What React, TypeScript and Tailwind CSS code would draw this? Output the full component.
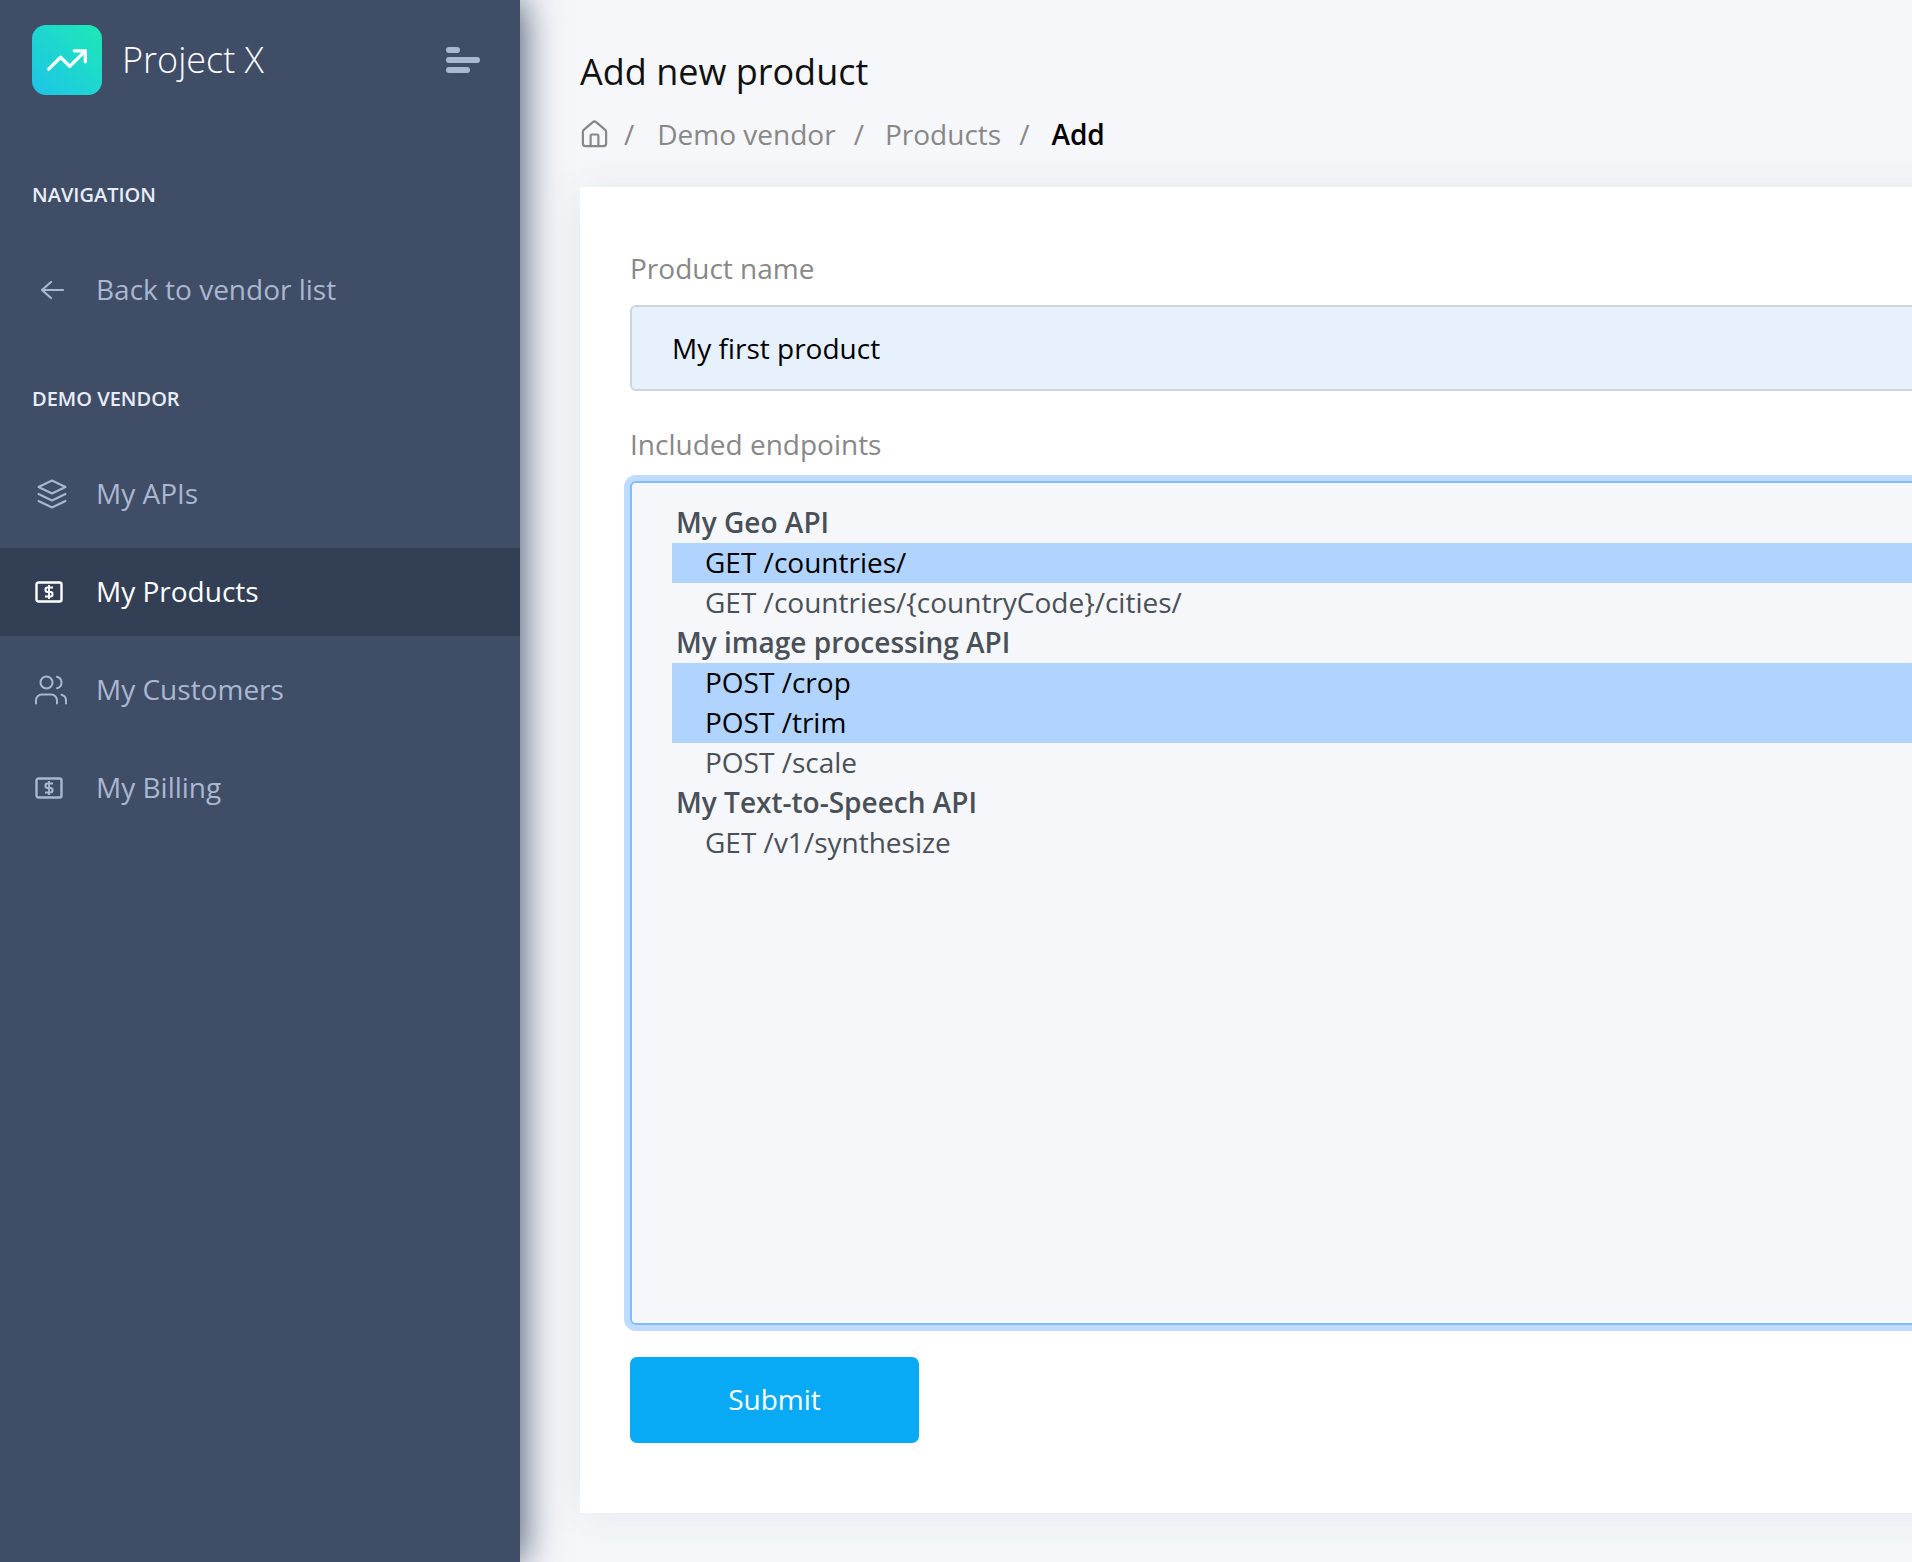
import { House, TrendingUp, Users } from "lucide-react";

function Bill({ className }: { className: string }) {
  return (
    <svg width="28" height="22" viewBox="0 0 28 22" fill="none" stroke="currentColor" strokeWidth="2.4" strokeLinejoin="round" className={className}>
      <rect x="1.5" y="1.5" width="25" height="19" rx="2" />
      <path d="M18 6.5H12.5Q10.5 6.5 10.5 8.75T12.5 11H15.5Q17.5 11 17.5 13.25T15.5 15.5H10" strokeWidth="2.1" />
      <path d="M14 4V18" strokeWidth="1.9" />
    </svg>
  );
}

function NavItem({ icon, label, active, cls }: { icon: React.ReactNode; label: string; active?: boolean; cls: string }) {
  return (
    <div className={`flex h-[88px] items-center ${cls} ${active ? "bg-[#333f54] text-white" : "text-[#a9b7d0]"}`}>
      {icon}
      <span className="-mt-0.5 text-[28px] leading-none">{label}</span>
    </div>
  );
}

const rows: { t: string; k: "g" | "o" | "s" }[] = [
  { t: "My Geo API", k: "g" },
  { t: "GET /countries/", k: "s" },
  { t: "GET /countries/{countryCode}/cities/", k: "o" },
  { t: "My image processing API", k: "g" },
  { t: "POST /crop", k: "s" },
  { t: "POST /trim", k: "s" },
  { t: "POST /scale", k: "o" },
  { t: "My Text-to-Speech API", k: "g" },
  { t: "GET /v1/synthesize", k: "o" },
];

export default function App() {
  return (
    <div className="flex h-[1562px] w-[1912px] overflow-hidden bg-[#f5f7fa] font-['Open_Sans',sans-serif]">
      <aside className="relative z-10 h-full w-[520px] shrink-0 bg-[#3f4d67] shadow-[2px_0_36px_0_#3f4d67]">
        <div className="flex h-[120px] items-center justify-between pl-8 pr-10">
          <div className="flex items-center">
            <div className="flex h-[70px] w-[70px] items-center justify-center rounded-[14px] bg-[linear-gradient(45deg,#1dc4e9,#1de9b6)] text-white">
              <TrendingUp size={44} strokeWidth={1.85} />
            </div>
            <span className="-mt-px ml-[20px] text-[36px] font-light leading-none text-white">Project X</span>
          </div>
          <div className="flex flex-col gap-1">
            <div className="h-1.5 w-3.5 rounded-full bg-[#a9b7d0]" />
            <div className="h-1.5 w-[34px] rounded-full bg-[#a9b7d0]" />
            <div className="h-1.5 w-6 rounded-full bg-[#a9b7d0]" />
          </div>
        </div>

        <div className="ml-8 mt-[62px] h-[26px] text-[20px] font-semibold leading-[26px] text-[#e8edf7]">NAVIGATION</div>
        <div className="mt-[38px]">
          <NavItem
            cls="pl-10"
            label="Back to vendor list"
            icon={
              <svg width="24" height="20" viewBox="0 0 24 20" fill="none" stroke="currentColor" strokeWidth="2.2" strokeLinecap="round" strokeLinejoin="round" className="mr-8 shrink-0">
                <path d="M23 10H2M11 2L2 10L11 18" />
              </svg>
            }
          />
        </div>
        <div className="ml-8 mt-[52px] h-[26px] text-[20px] font-semibold leading-[26px] text-[#e8edf7]">DEMO VENDOR</div>
        <div className="mt-[38px] flex flex-col gap-2.5">
          <NavItem
            cls="pl-[37px]"
            label="My APIs"
            icon={
              <svg width="30" height="30" viewBox="0 0 30 30" fill="none" stroke="currentColor" strokeWidth="2" strokeLinecap="round" strokeLinejoin="round" className="mr-[29px] shrink-0">
                <path d="M15 1.5L28.5 8L15 14.5L1.5 8Z" />
                <path d="M1.5 15L15 21.5L28.5 15" />
                <path d="M1.5 22L15 28.5L28.5 22" />
              </svg>
            }
          />
          <NavItem cls="pl-[35px]" active label="My Products" icon={<Bill className="mr-[33px] shrink-0" />} />
          <NavItem cls="pl-[33px]" label="My Customers" icon={<Users size={36} strokeWidth={1.35} className="mr-[27px] shrink-0" />} />
          <NavItem cls="pl-[35px]" label="My Billing" icon={<Bill className="mr-[33px] shrink-0" />} />
        </div>
      </aside>

      <main className="flex-1 overflow-hidden pl-[60px]">
        <h1 className="mt-[50px] h-[44px] text-[36px] font-normal leading-[44px] text-[#111]">Add new product</h1>
        <div className="mt-[20px] flex h-[40px] items-center text-[28px] leading-none text-[#888]">
          <House size={31} strokeWidth={1.7} className="-ml-px text-[#888]" />
          <span className="ml-[14px]">/</span>
          <span className="ml-[23px]">Demo vendor</span>
          <span className="ml-[18px]">/</span>
          <span className="ml-[21px]">Products</span>
          <span className="ml-[18px]">/</span>
          <span className="ml-[22px] font-semibold text-black">Add</span>
        </div>

        <section className="mt-[33px] h-[1326px] w-[1500px] bg-white pl-[50px] pt-[64px] shadow-[0_2px_40px_0_rgba(69,90,100,0.09)]">
          <div className="h-[34px] text-[28px] leading-[34px] text-[#888]">Product name</div>
          <div className="mt-[20px] flex h-[86px] items-center rounded-[6px] border-2 border-[#ced4da] bg-[#e7f0fd] pl-[40px] text-[28px] text-black">
            My first product
          </div>
          <div className="mt-[36px] h-[34px] text-[28px] leading-[34px] text-[#888]">Included endpoints</div>
          <div className="mt-[20px] h-[844px] rounded-[6px] border-2 border-[#80bdff] bg-[#f5f7fa] pl-[40px] pt-[20px] text-[28px] text-[#495057] shadow-[0_0_0_6px_#bfdbfe]">
            {rows.map((r) => (
              <div
                key={r.t}
                className={`h-[40px] leading-[38px] ${r.k === "g" ? "pl-[4px] font-semibold" : "pl-[33px]"} ${r.k === "s" ? "bg-[#b0d4fe] text-black" : ""}`}
              >
                {r.t}
              </div>
            ))}
          </div>
          <button className="mt-[32px] h-[86px] w-[289px] rounded-[7px] bg-[#08a9f5] pb-0.5 text-[28px] text-white">Submit</button>
        </section>
      </main>
    </div>
  );
}
